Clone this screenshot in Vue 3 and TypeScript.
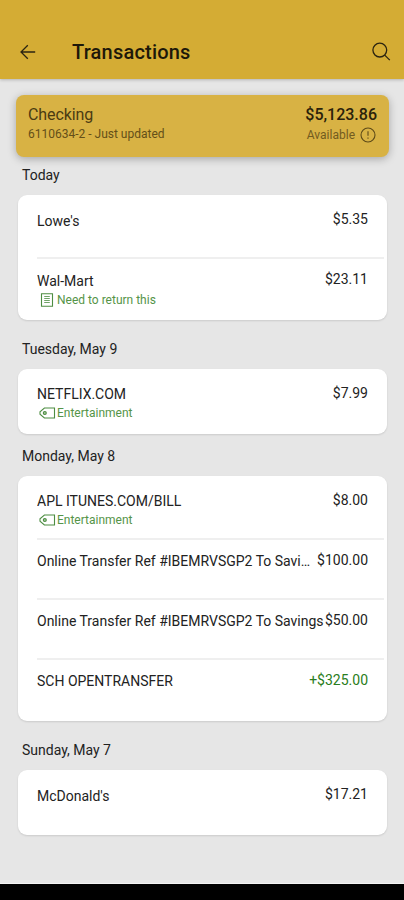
<script setup lang="ts">
interface Transaction {
  name: string
  amount: string
  credit?: boolean
  note?: string
  tag?: string
}

interface Day {
  label: string
  key: string
  items: Transaction[]
}

const days: Day[] = [
  {
    label: 'Today',
    key: 'today',
    items: [
      { name: "Lowe's", amount: '$5.35' },
      { name: 'Wal-Mart', amount: '$23.11', note: 'Need to return this' },
    ],
  },
  {
    label: 'Tuesday, May 9',
    key: 'tuesday',
    items: [{ name: 'NETFLIX.COM', amount: '$7.99', tag: 'Entertainment' }],
  },
  {
    label: 'Monday, May 8',
    key: 'monday',
    items: [
      { name: 'APL ITUNES.COM/BILL', amount: '$8.00', tag: 'Entertainment' },
      { name: 'Online Transfer Ref #IBEMRVSGP2 To Savings', amount: '$100.00' },
      { name: 'Online Transfer Ref #IBEMRVSGP2 To Savings', amount: '$50.00' },
      { name: 'SCH OPENTRANSFER', amount: '+$325.00', credit: true },
    ],
  },
  {
    label: 'Sunday, May 7',
    key: 'sunday',
    items: [{ name: "McDonald's", amount: '$17.21' }],
  },
]
</script>

<template>
  <div class="screen">
    <header class="bar">
      <svg class="back" viewBox="0 0 16 16" width="16" height="16">
        <path d="M15.2 8H1.2M7.8 1.2L1 8l6.8 6.8" />
      </svg>
      <h1 class="title">Transactions</h1>
      <svg class="search" viewBox="0 0 20 20" width="20" height="20">
        <circle cx="8.8" cy="8.1" r="6.9" />
        <path d="M13.7 13.1l5.1 5" />
      </svg>
    </header>

    <main class="content">
      <section class="account">
        <div class="account-info">
          <span class="account-name">Checking</span>
          <span class="account-sub">6110634-2 - Just updated</span>
        </div>
        <div class="account-balance">
          <span class="balance">$5,123.86</span>
          <span class="available">
            <span>Available</span>
            <svg viewBox="0 0 16 16" width="16" height="16">
              <circle cx="8" cy="8" r="7" />
              <path d="M8 4.2v4.6M8 10.6v1.2" />
            </svg>
          </span>
        </div>
      </section>

      <section v-for="day in days" :key="day.key" class="day" :class="day.key">
        <h2 class="day-label">{{ day.label }}</h2>
        <ul class="card">
          <li v-for="(item, i) in day.items" :key="i" class="row">
            <div class="details">
              <span class="name">{{ item.name }}</span>
              <span v-if="item.note" class="meta note">
                <svg viewBox="0 0 14 14" width="14" height="14">
                  <path d="M1.5 .8h11v12.4h-11z" />
                  <path class="thin" d="M4.2 3.5h5.6M4.2 5.5h5.6M4.2 7.5h5.6M4.2 9.5h5.6" />
                </svg>
                <span>{{ item.note }}</span>
              </span>
              <span v-if="item.tag" class="meta tag">
                <svg viewBox="0 0 17 12" width="17" height="12">
                  <path d="M5.4 1h10.1v10H5.4L1 7.2V4.8z" />
                  <circle class="hole" cx="5.8" cy="6" r="1.5" />
                </svg>
                <span>{{ item.tag }}</span>
              </span>
            </div>
            <span class="amount" :class="{ credit: item.credit }">{{ item.amount }}</span>
          </li>
        </ul>
      </section>
    </main>

    <div class="system-nav"></div>
  </div>
</template>

<style>
body {
  margin: 0;
}
</style>

<style scoped>
.screen {
  display: flex;
  flex-direction: column;
  width: 404px;
  height: 900px;
  overflow: hidden;
  background: #e6e6e6;
  color: #222;
  font-family: Roboto, "Liberation Sans", sans-serif;
}

.bar {
  display: flex;
  align-items: center;
  flex: none;
  box-sizing: border-box;
  height: 79px;
  padding: 24px 13px 0 20px;
  background: #d4ac34;
  box-shadow: 0 1px 3px rgba(0, 0, 0, 0.22);
}

svg {
  display: block;
  flex: none;
  fill: none;
  stroke: #2b2410;
  stroke-width: 1.3;
}

.title {
  flex: 1;
  margin: 0 0 0 36px;
  font-size: 20px;
  font-weight: 500;
  line-height: 24px;
  letter-spacing: 0.2px;
  color: #1d1809;
}

.content {
  flex: 1;
  padding: 16px 17px 0 18px;
}

.account {
  display: flex;
  justify-content: space-between;
  box-sizing: border-box;
  height: 62px;
  margin: 0 -2px;
  padding: 10px 12px 0;
  border-radius: 8px;
  background: #d8b244;
  box-shadow: 0 2px 8px rgba(0, 0, 0, 0.28);
}

.account-info,
.account-balance {
  display: flex;
  flex-direction: column;
}

.account-balance {
  align-items: flex-end;
}

.account-name {
  font-size: 16px;
  line-height: 19px;
  letter-spacing: -0.1px;
  color: #4a3b12;
}

.account-sub {
  font-size: 12px;
  line-height: 20px;
  color: #644f18;
}

.balance {
  font-size: 16px;
  font-weight: 500;
  line-height: 19px;
  color: #2a210a;
}

.available {
  display: flex;
  align-items: center;
  gap: 5px;
  padding-right: 1px;
  font-size: 12px;
  line-height: 22px;
  color: #725b1f;
}

.available svg {
  stroke: #5d4a18;
  stroke-width: 1.1;
}

.day-label {
  margin: 0 0 0 4px;
  font-size: 14px;
  font-weight: 400;
  line-height: 18px;
  color: #222;
}

.today {
  padding-top: 9px;
}

.tuesday {
  padding-top: 20px;
}

.monday {
  padding-top: 13px;
}

.sunday {
  padding-top: 20px;
}

.card {
  margin: 11px 0 0;
  padding: 3px 0 2px;
  border-radius: 9px;
  background: #fff;
  box-shadow: 0 1px 2px rgba(0, 0, 0, 0.12);
  list-style: none;
}

.row {
  display: flex;
  justify-content: space-between;
  box-sizing: border-box;
  height: 60px;
  margin: 0 3px 0 19px;
  padding: 12px 16px 0 0;
}

.row + .row {
  border-top: 2px solid #efefef;
  margin-top: -1px;
  height: 61px;
  padding-top: 11px;
}

.details {
  display: flex;
  flex: 1;
  flex-direction: column;
  min-width: 0;
  margin-right: 1px;
}

.today .details,
.sunday .details {
  padding-top: 1px;
}

.name {
  overflow: hidden;
  font-size: 14px;
  line-height: 21px;
  text-overflow: ellipsis;
  white-space: nowrap;
}

.amount {
  padding-top: 1px;
  font-size: 14px;
  line-height: 17px;
}

.credit {
  color: #2a7d20;
}

.meta {
  display: flex;
  align-items: center;
  height: 18px;
  margin-top: -1px;
  font-size: 12px;
  color: #559448;
}

.meta svg {
  stroke: #4d8d42;
  stroke-width: 1.1;
}

.meta .thin {
  stroke-width: 0.8;
}

.meta .hole {
  fill: #9cc394;
}

.note {
  gap: 3px;
  padding-left: 3px;
}

.tag {
  gap: 1px;
  padding-left: 2px;
}

.system-nav {
  flex: none;
  height: 16px;
  background: #000;
  border-top: 1px solid #f4f4f4;
}
</style>
